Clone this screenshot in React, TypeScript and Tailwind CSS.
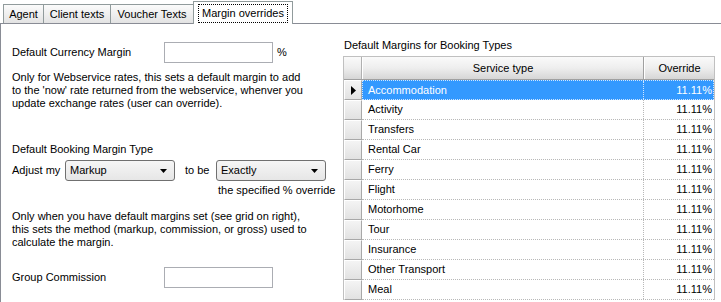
import React from "react";

const rows = [
  "Accommodation",
  "Activity",
  "Transfers",
  "Rental Car",
  "Ferry",
  "Flight",
  "Motorhome",
  "Tour",
  "Insurance",
  "Other Transport",
  "Meal",
];

function Caret() {
  return (
    <svg width="7" height="4" viewBox="0 0 7 4" className="block">
      <path d="M0 0 H7 L3.5 4 Z" fill="#000" />
    </svg>
  );
}

function Select({ value, width }: { value: string; width: string }) {
  return (
    <div
      className={`${width} h-[21px] flex items-center justify-between pl-[4px] pr-[7px] border border-[#707070] rounded-[3px] bg-gradient-to-b from-[#f6f6f6] to-[#e6e6e6]`}
    >
      <span>{value}</span>
      <Caret />
    </div>
  );
}

export default function App() {
  return (
    <div className="w-[721px] h-[302px] overflow-hidden bg-white text-[11px] leading-[13px] text-black font-['Liberation_Sans',Arial,sans-serif]">
      {/* Tab strip */}
      <div className="h-[23px] flex items-end pl-[3px]">
        <div className="w-[40px] h-[19px] flex items-center justify-center border-t border-l border-[#919b9c] bg-gradient-to-b from-[#fbfbfb] to-[#e3e3e3]">
          Agent
        </div>
        <div className="w-[67px] h-[19px] flex items-center justify-center border-t border-l border-[#919b9c] bg-gradient-to-b from-[#fbfbfb] to-[#e3e3e3]">
          Client texts
        </div>
        <div className="w-[83px] h-[19px] flex items-center justify-center border-t border-l border-[#919b9c] bg-gradient-to-b from-[#fbfbfb] to-[#e3e3e3]">
          Voucher Texts
        </div>
        <div className="relative z-10 w-[100px] h-[23px] mb-[-1px] flex items-start justify-center pt-[2px] border-t border-x border-[#919b9c] bg-white">
          <span className="h-[19px] px-[3px] flex items-center border border-dotted border-black">
            Margin overrides
          </span>
        </div>
      </div>

      {/* Panel */}
      <div className="h-[279px] flex border-t border-l border-[#898c95]">
        {/* Left column */}
        <div className="w-[341px] pl-[11px] flex flex-col">
          <div className="mt-[18px] flex items-center h-[21px]">
            <span className="w-[152px]">Default Currency Margin</span>
            <div className="w-[109px] h-[21px] border border-[#abadb3] bg-white" />
            <span className="ml-[4px]">%</span>
          </div>
          <p className="mt-[8px]">
            Only for Webservice rates, this sets a default margin to add
            <br />
            to the 'now' rate returned from the webservice, whenver you
            <br />
            update exchange rates (user can override).
          </p>

          <p className="mt-[33px]">Default Booking Margin Type</p>
          <div className="mt-[4px] flex items-center h-[21px]">
            <span className="w-[53px]">Adjust my</span>
            <Select value="Markup" width="w-[110px]" />
            <span className="ml-[10px] w-[31px]">to be</span>
            <Select value="Exactly" width="w-[110px]" />
          </div>
          <p className="mt-[3px] pl-[206px]">the specified % override</p>

          <p className="mt-[13px]">
            Only when you have default margins set (see grid on right),
            <br />
            this sets the method (markup, commission, or gross) used to
            <br />
            calculate the margin.
          </p>

          <div className="mt-[18px] flex items-center h-[21px]">
            <span className="w-[152px]">Group Commission</span>
            <div className="w-[109px] h-[21px] border border-[#abadb3] bg-white" />
          </div>
        </div>

        {/* Right column */}
        <div className="w-[374px] flex flex-col">
          <p className="mt-[15px] pl-[2px]">Default Margins for Booking Types</p>
          <div className="mt-[4px] ml-[1px] w-[372px] border-t border-l border-r border-[#c0c0c0] flex flex-col">
            {/* Header */}
            <div className="h-[23px] flex border-b border-[#a0a0a0] bg-gradient-to-b from-[#fafafa] via-[#eeeeee] to-[#d6d6d6]">
              <div className="w-[18px] border-r border-[#b0b0b0]" />
              <div className="w-[282px] flex items-center justify-center border-r border-[#a0a0a0] border-l border-l-white">
                Service type
              </div>
              <div className="flex-1 flex items-center justify-center border-l border-white">
                Override
              </div>
            </div>
            {rows.map((r, i) => {
              const sel = i === 0;
              return (
                <div key={r} className="h-[20px] flex">
                  <div className="w-[18px] flex items-center justify-center border-t border-l border-white border-b border-b-[#a8a8a8] border-r border-r-[#a8a8a8] bg-gradient-to-b from-[#f4f4f4] to-[#e2e2e2]">
                    {sel && (
                      <svg width="5" height="9" viewBox="0 0 5 9">
                        <path d="M0 0 L5 4.5 L0 9 Z" fill="#000" />
                      </svg>
                    )}
                  </div>
                  {sel ? (
                    <div className="flex-1 flex bg-[#3399ff] text-white border border-dotted border-[#cfe6ff]">
                      <div className="w-[281px] flex items-center pl-[5px] border-r border-dotted border-[#cfe6ff]">
                        {r}
                      </div>
                      <div className="flex-1 flex items-center justify-end pr-[1px]">
                        11.11%
                      </div>
                    </div>
                  ) : (
                    <div className="flex-1 flex border-b border-dotted border-[#b8b8b8]">
                      <div className="w-[282px] flex items-center pl-[6px] border-r border-dotted border-[#b8b8b8]">
                        {r}
                      </div>
                      <div className="flex-1 flex items-center justify-end pr-[2px]">
                        11.11%
                      </div>
                    </div>
                  )}
                </div>
              );
            })}
          </div>
        </div>
      </div>
    </div>
  );
}
